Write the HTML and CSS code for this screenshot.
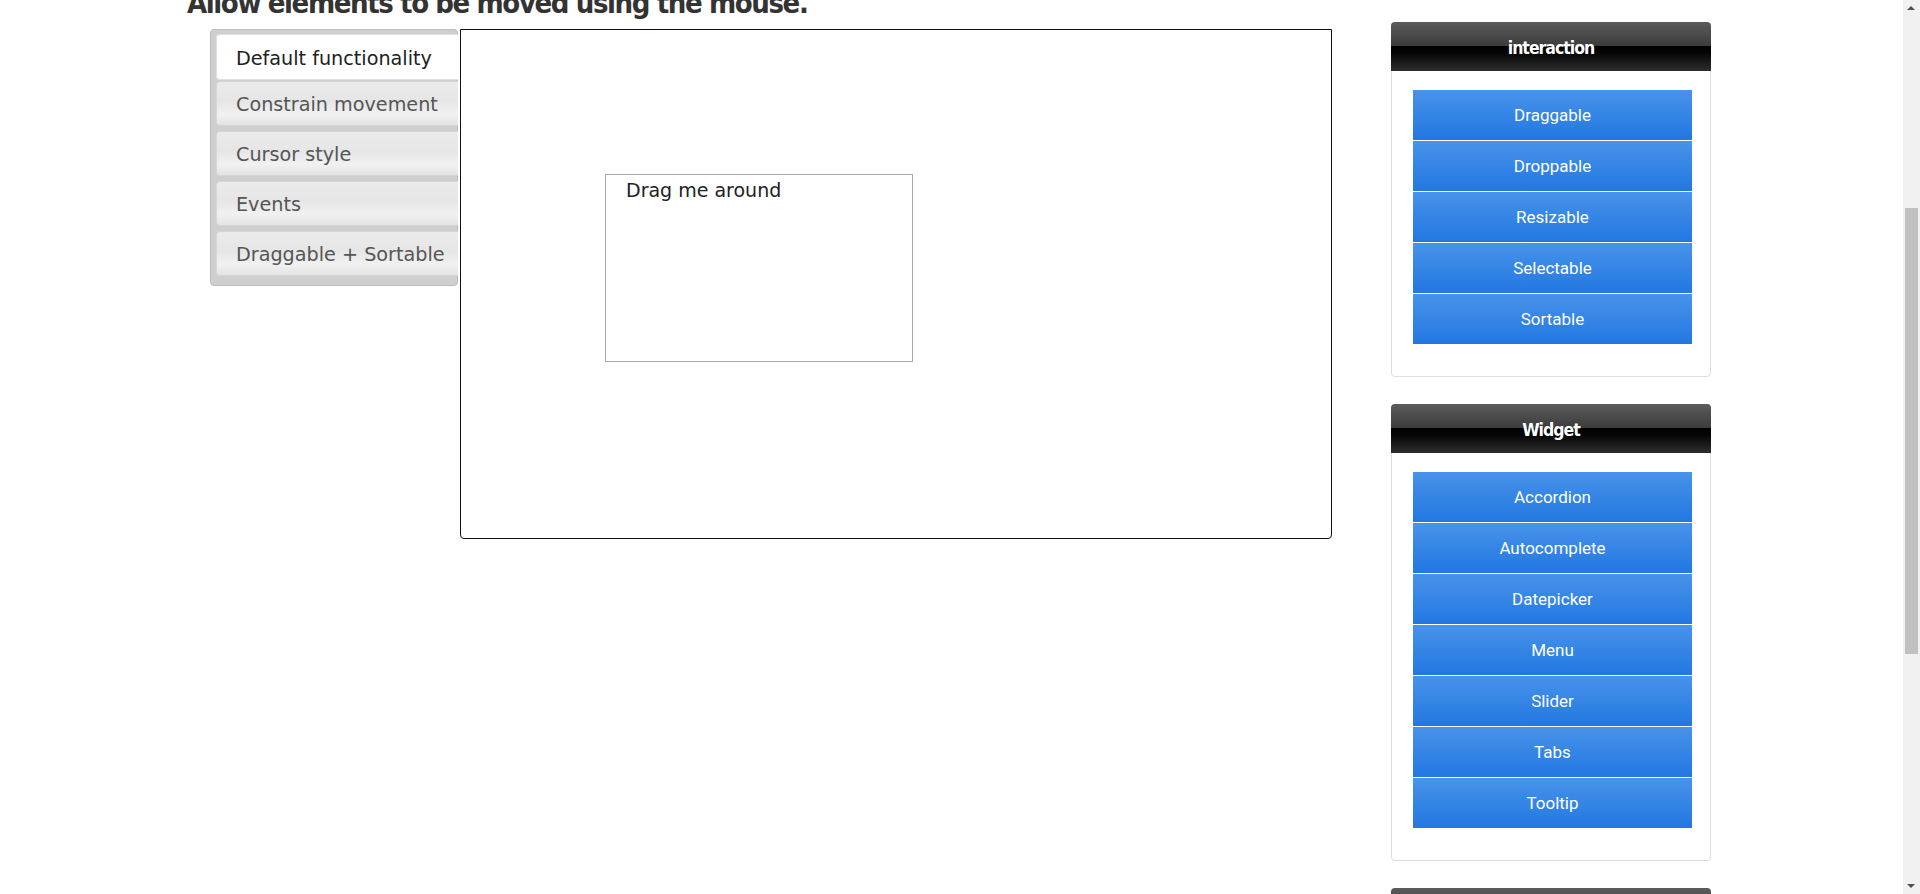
FILE: index.html
```html
<!DOCTYPE html>
<html lang="en">
<head>
<meta charset="utf-8">
<title>Draggable</title>
<link rel="stylesheet" href="styles.css">
</head>
<body>
<div class="page">
  <main class="main">
    <h1 class="title">Allow elements to be moved using the mouse.</h1>
    <div class="demo">
      <ul class="tabs">
        <li class="tab tab-active">Default functionality</li>
        <li class="tab">Constrain movement</li>
        <li class="tab">Cursor style</li>
        <li class="tab">Events</li>
        <li class="tab">Draggable + Sortable</li>
      </ul>
      <div class="panel">
        <div class="drag"><p class="drag-text">Drag me around</p></div>
      </div>
    </div>
  </main>
  <aside class="side">
    <section class="card">
      <h2 class="card-head">interaction</h2>
      <ul class="links">
        <li class="link">Draggable</li>
        <li class="link">Droppable</li>
        <li class="link">Resizable</li>
        <li class="link">Selectable</li>
        <li class="link">Sortable</li>
      </ul>
    </section>
    <section class="card">
      <h2 class="card-head">Widget</h2>
      <ul class="links">
        <li class="link">Accordion</li>
        <li class="link">Autocomplete</li>
        <li class="link">Datepicker</li>
        <li class="link">Menu</li>
        <li class="link">Slider</li>
        <li class="link">Tabs</li>
        <li class="link">Tooltip</li>
      </ul>
    </section>
    <section class="card">
      <h2 class="card-head">Effects</h2>
    </section>
  </aside>
</div>
<div class="scrollbar">
  <span class="sb-up"></span>
  <span class="sb-thumb"></span>
  <span class="sb-down"></span>
</div>
</body>
</html>
```

FILE: styles.css
```css
html, body {
  margin: 0;
  padding: 0;
  height: 100%;
  overflow: hidden;
  background: #fff;
}

body {
  font-family: "DejaVu Sans", Verdana, sans-serif;
  color: #222;
}

.page {
  display: grid;
  grid-template-columns: 1204px 320px;
  padding-left: 187px;
}

.main {
  min-width: 0;
}

.title {
  margin: -15px 0 8px;
  font-family: "DejaVu Sans Condensed", "DejaVu Sans", sans-serif;
  font-stretch: condensed;
  font-weight: 700;
  font-size: 29px;
  line-height: 36px;
  letter-spacing: -1.4px;
  color: #333;
  white-space: nowrap;
}

.demo {
  display: flex;
  align-items: flex-start;
  margin-left: 23px;
}

.tabs {
  list-style: none;
  margin: 0;
  width: 248px;
  box-sizing: border-box;
  padding: 4px 0 9px 5px;
  background: #cfcfcf;
  border: 1px solid #bdbdbd;
  border-radius: 4px;
}

.tab {
  height: 45px;
  box-sizing: border-box;
  margin: 0 -1px 5px 0;
  padding: 12px 0 0 19px;
  font-size: 19.2px;
  line-height: 22px;
  color: #555;
  white-space: nowrap;
  border: 1px solid #d6d6d6;
  border-right: 0;
  border-radius: 4px 0 0 4px;
  background: linear-gradient(to bottom, #ebebeb 0%, #e6e6e6 45%, #f1f1f1 75%, #e4e4e4 100%);
}

.tab:last-child {
  margin-bottom: 0;
}

.tab-active {
  height: 46px;
  margin-bottom: 1px;
  padding-top: 13px;
  color: #212121;
  background: #fff;
  border-color: #e0e0e0;
}

.panel {
  margin-left: 2px;
  width: 872px;
  height: 510px;
  box-sizing: border-box;
  border: 1px solid #111;
  border-radius: 0 0 4px 4px;
  padding: 144px 0 0 144px;
}

.drag {
  width: 308px;
  height: 188px;
  box-sizing: border-box;
  border: 1px solid #aaa;
  padding: 4px 20px;
}

.drag-text {
  margin: 0;
  font-size: 19px;
  line-height: 22px;
  color: #222;
}

.side {
  padding-top: 22px;
}

.card {
  border: 1px solid #ddd;
  border-radius: 4px;
  margin-bottom: 27px;
  background: #fff;
}

.card-head {
  margin: -1px -1px 0;
  height: 49px;
  box-sizing: border-box;
  padding-top: 3px;
  border-radius: 4px 4px 0 0;
  background: linear-gradient(to bottom, #5c5c5c 0%, #3c3c3c 48%, #000 50%, #070707 65%, #2e2e2e 100%);
  color: #fff;
  text-align: center;
  font-family: "DejaVu Sans Condensed", "DejaVu Sans", sans-serif;
  font-stretch: condensed;
  font-weight: 700;
  font-size: 17.5px;
  letter-spacing: -1px;
  line-height: 46px;
}

.links {
  list-style: none;
  margin: 0;
  padding: 19px 18px 31px 21px;
}

.link {
  height: 50px;
  margin-bottom: 1px;
  background: linear-gradient(to bottom, #4893ea 0%, #2277e1 100%);
  color: #fff;
  text-align: center;
  font-family: Roboto, "Liberation Sans", sans-serif;
  font-size: 17px;
  line-height: 51px;
}

.scrollbar {
  position: fixed;
  top: 0;
  right: 0;
  width: 17px;
  height: 100%;
  background: #f1f1f1;
}

.sb-up, .sb-down {
  position: absolute;
  left: 4px;
  width: 0;
  height: 0;
  border-left: 4.5px solid transparent;
  border-right: 4.5px solid transparent;
}

.sb-up {
  top: 6px;
  border-bottom: 4px solid #505050;
}

.sb-down {
  bottom: 6px;
  border-top: 4px solid #505050;
}

.sb-thumb {
  position: absolute;
  left: 2px;
  right: 2px;
  top: 208px;
  height: 446px;
  background: #c1c1c1;
}
```
